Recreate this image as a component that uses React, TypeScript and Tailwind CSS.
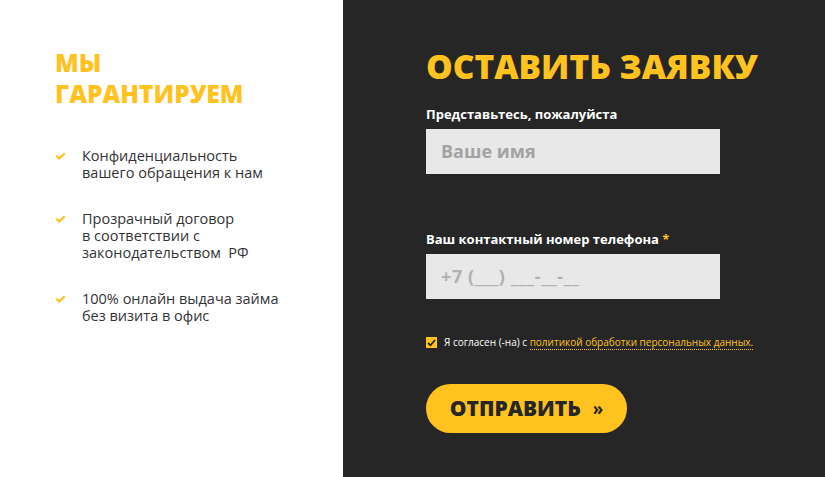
import React from "react";

const items = [
  ["Конфиденциальность", "вашего обращения к нам"],
  ["Прозрачный договор", "в соответствии с", "законодательством  РФ"],
  ["100% онлайн выдача займа", "без визита в офис"],
];

function Check() {
  return (
    <svg width="11" height="8" viewBox="0 0 11 8" className="mt-[5px] shrink-0">
      <path d="M1.2 3.6 L4.3 6.4 L9.8 1.2" fill="none" stroke="#ffc21f" strokeWidth="2.2" />
    </svg>
  );
}

export default function App() {
  return (
    <div className="flex h-[477px] w-full overflow-hidden font-['Open_Sans',sans-serif]">
      {/* Left column */}
      <div className="w-[343px] shrink-0 bg-white pl-[55px] pt-[47px]">
        <h2 className="text-[24.5px] font-extrabold uppercase leading-[31px] text-[#ffc21f]">
          Мы
          <br />
          гарантируем
        </h2>

        <ul className="mt-[38px] flex flex-col gap-[29px]">
          {items.map((lines, i) => (
            <li key={i} className="flex gap-[16px]">
              <Check />
              <p className="text-[14.5px] leading-[17px] text-[#333] whitespace-pre">
                {lines.join("\n")}
              </p>
            </li>
          ))}
        </ul>
      </div>

      {/* Right column */}
      <div className="flex-1 bg-[#262626] pl-[83px] pt-[44px]">
        <h1 className="text-[33.5px] font-extrabold uppercase leading-[44px] text-[#ffc21f]">
          Оставить заявку
        </h1>

        <label className="mt-[17px] block text-[13px] font-bold leading-[18px] text-white">
          Представьтесь, пожалуйста
        </label>
        <div className="mt-[6px] flex h-[45px] w-[294px] items-center bg-[#e8e8e8] pl-[15px] text-[18px] font-bold text-[#a3a3a3]">
          Ваше имя
        </div>

        <label className="mt-[56px] block text-[13px] font-bold leading-[18px] text-white">
          Ваш контактный номер телефона <span className="text-[#ffc21f]">*</span>
        </label>
        <div className="mt-[6px] flex h-[45px] w-[294px] items-center bg-[#e8e8e8] pl-[15px] text-[18px] font-bold tracking-[0.6px] text-[#b0b0b0]">
          +7 (___) ___-__-__
        </div>

        <div className="mt-[36px] flex items-center gap-[7px] text-[10px] text-white">
          <span className="flex h-[11px] w-[11px] items-center justify-center bg-[#ffc21f]">
            <svg width="9" height="8" viewBox="0 0 9 8">
              <path d="M1 4 L3.5 6.3 L8 1" fill="none" stroke="#262626" strokeWidth="1.8" />
            </svg>
          </span>
          <span>
            Я согласен (-на) с{" "}
            <span className="border-b border-dotted border-[#ffc21f] text-[#ffc21f]">
              политикой обработки персональных данных.
            </span>
          </span>
        </div>

        <button className="mt-[34px] flex h-[49px] w-[201px] items-center justify-center gap-[12px] rounded-full bg-[#ffc21f] text-[21px] font-extrabold uppercase text-[#262626]">
          Отправить <span className="text-[17px] font-bold">»</span>
        </button>
      </div>
    </div>
  );
}
